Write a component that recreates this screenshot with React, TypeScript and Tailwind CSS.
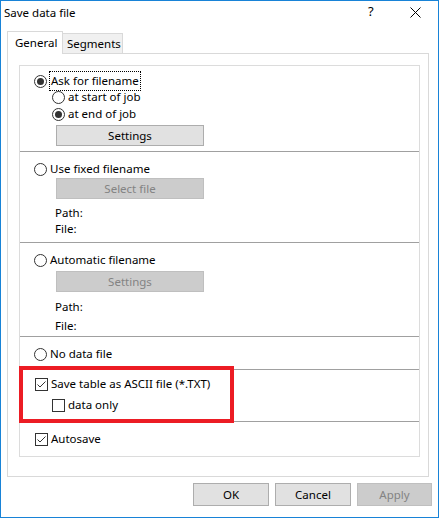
import React from 'react';

function Radio({ checked }: { checked?: boolean }) {
  return (
    <span className="w-[13px] h-[13px] rounded-full border border-[#333333] bg-white flex items-center justify-center shrink-0">
      {checked && <span className="w-[7px] h-[7px] rounded-full bg-[#333333]" />}
    </span>
  );
}

function Check({ checked }: { checked?: boolean }) {
  return (
    <span className="w-[13px] h-[13px] border border-[#333333] bg-white flex items-center justify-center shrink-0">
      {checked && (
        <svg width="11" height="11" viewBox="0 0 11 11">
          <polyline points="1.5,5.5 4,8 9.5,2.5" fill="none" stroke="#333333" strokeWidth="1" />
        </svg>
      )}
    </span>
  );
}

function Btn({ label, disabled, className = '' }: { label: string; disabled?: boolean; className?: string }) {
  return (
    <div
      className={
        'flex items-center justify-center border ' +
        (disabled ? 'bg-[#cccccc] border-[#bfbfbf] text-[#838383] ' : 'bg-[#e1e1e1] border-[#adadad] text-black ') +
        className
      }
    >
      {label}
    </div>
  );
}

function Sep() {
  return <div className="h-px bg-[#a0a0a0]" />;
}

export default function App() {
  return (
    <div className="w-[440px] h-[519px] bg-white text-[11.5px] text-black font-['Noto_Sans',sans-serif] leading-none">
      <div className="w-[439px] h-[518px] border border-[#1883d7] flex flex-col">
        {/* Title bar */}
        <div className="h-[30px] flex items-center relative shrink-0">
          <span className="pl-[3px] -mt-[7px]">Save data file</span>
          <span className="absolute left-[367px] top-[4px] text-[13px]">?</span>
          <svg className="absolute left-[409px] top-[6px]" width="11" height="11" viewBox="0 0 11 11">
            <path d="M0.5 0.5 L10.5 10.5 M10.5 0.5 L0.5 10.5" stroke="#000" strokeWidth="1" />
          </svg>
        </div>

        {/* Tabs */}
        <div className="ml-[6px] h-[22px] flex items-end shrink-0">
          <div className="h-[23px] -mb-px relative z-10 w-[56px] border border-b-0 border-[#d9d9d9] bg-white flex items-center pl-[7px]">
            General
          </div>
          <div className="h-[20px] w-[60px] border-t border-r border-[#d9d9d9] bg-[#f0f0f0] flex items-center pl-[4px]">
            Segments
          </div>
        </div>

        {/* Tab panel */}
        <div className="ml-[6px] w-[422px] h-[424px] border border-[#d9d9d9] shrink-0">
          <div className="mt-[11px] ml-[11px] w-[401px] h-[392px] border border-[#dcdcdc] flex flex-col relative">
            {/* Section 1 */}
            <div className="h-[85px] flex flex-col pt-[7px]">
              <div className="h-[16px] flex items-center pl-[14px] gap-[2px]">
                <Radio checked />
                <span className="border border-dotted border-black px-px py-[3px]">Ask for filename</span>
              </div>
              <div className="h-[16px] flex items-center pl-[32px] gap-[3px]">
                <Radio />
                <span>at start of job</span>
              </div>
              <div className="h-[16px] mt-px flex items-center pl-[32px] gap-[3px]">
                <Radio checked />
                <span>at end of job</span>
              </div>
              <Btn label="Settings" className="ml-[36px] mt-[3px] w-[148px] h-[21px]" />
            </div>
            <Sep />

            {/* Section 2 */}
            <div className="h-[90px] flex flex-col pt-[9px]">
              <div className="h-[16px] flex items-center pl-[14px] gap-[3px]">
                <Radio />
                <span>Use fixed filename</span>
              </div>
              <Btn label="Select file" disabled className="ml-[36px] mt-px w-[148px] h-[21px]" />
              <div className="h-[16px] mt-[6px] flex items-center pl-[35px]">Path:</div>
              <div className="h-[16px] flex items-center pl-[35px]">File:</div>
            </div>
            <Sep />

            {/* Section 3 */}
            <div className="h-[93px] flex flex-col pt-[9px]">
              <div className="h-[16px] flex items-center pl-[14px] gap-[3px]">
                <Radio />
                <span>Automatic filename</span>
              </div>
              <Btn label="Settings" disabled className="ml-[36px] mt-[3px] w-[148px] h-[21px]" />
              <div className="h-[16px] mt-[7px] flex items-center pl-[35px]">Path:</div>
              <div className="h-[16px] mt-[3px] flex items-center pl-[35px]">File:</div>
            </div>
            <Sep />

            {/* Section 4 */}
            <div className="h-[32px] flex flex-col pt-[9px]">
              <div className="h-[16px] flex items-center pl-[14px] gap-[3px]">
                <Radio />
                <span>No data file</span>
              </div>
            </div>
            <Sep />

            {/* Section 5 */}
            <div className="h-[51px] flex flex-col pt-[6px]">
              <div className="h-[16px] flex items-center pl-[15px] gap-[3px]">
                <Check checked />
                <span>Save table as ASCII file (*.TXT)</span>
              </div>
              <div className="h-[16px] mt-[5px] flex items-center pl-[32px] gap-[3px]">
                <Check />
                <span>data only</span>
              </div>
            </div>
            <Sep />

            {/* Section 6 */}
            <div className="flex-1 flex flex-col pt-[9px]">
              <div className="h-[16px] flex items-center pl-[15px] gap-[3px]">
                <Check checked />
                <span>Autosave</span>
              </div>
            </div>

            {/* red highlight */}
            <div className="absolute left-[-1px] top-[300px] w-[215px] h-[57px] border-4 border-[#ec1c24] pointer-events-none" />
          </div>
        </div>

        {/* Buttons */}
        <div className="flex justify-end gap-[6px] pr-[6px] mt-[6px]">
          <Btn label="OK" className="w-[76px] h-[23px]" />
          <Btn label="Cancel" className="w-[76px] h-[23px]" />
          <Btn label="Apply" disabled className="w-[75px] h-[23px]" />
        </div>
      </div>
    </div>
  );
}
